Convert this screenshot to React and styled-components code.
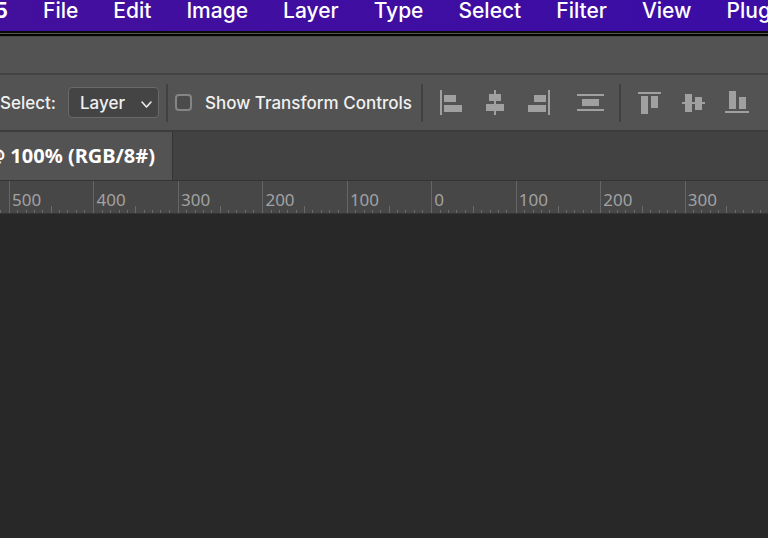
import React from "react";
import styled, { createGlobalStyle } from "styled-components";

const GlobalStyle = createGlobalStyle`
  * { box-sizing: border-box; }
  body { margin: 0; background: #282828; overflow: hidden; font-family: Inter, "Liberation Sans", sans-serif; }
  button { border: 0; padding: 0; background: none; color: inherit; font: inherit; flex: none; }
`;

const Window = styled.div`
  display: flex;
  flex-direction: column;
  min-height: 100vh;
  overflow: hidden;
  white-space: nowrap;
`;

const MenuBar = styled.nav`
  display: flex;
  align-items: flex-start;
  gap: 35px;
  height: 31px;
  background: linear-gradient(90deg, #430f9d, #3b0da6);
  color: #fff;
  font-size: 21px;
  font-weight: 500;
  line-height: 21px;
  overflow: hidden;
`;

const MenuItem = styled.button``;

const AppName = styled(MenuItem)`
  && {
    display: flex;
    justify-content: flex-end;
    width: 8px;
    font-weight: 700;
  }
`;

const WindowEdge = styled.div`
  height: 5px;
  border-top: 2px solid #0c0c0c;
  border-bottom: 2px solid #050505;
  background: #50574a;
`;

const TitleStrip = styled.div`
  height: 39px;
  background: #535353;
  border-top: 1px solid #474747;
  border-bottom: 2px solid #434343;
`;

const OptionsBar = styled.div`
  display: flex;
  align-items: center;
  height: 57px;
  background: #535353;
  border-bottom: 2px solid #3c3c3c;
  color: #f0f0f0;
  font-size: 17px;
  font-weight: 500;
  line-height: 24px;
`;

const SelectField = styled.label`
  flex: none;
  display: flex;
  align-items: center;
  gap: 12px;
  margin-right: 7px;
`;

const SelectBox = styled.span`
  position: relative;
  display: flex;
  svg { position: absolute; right: 5px; top: 12px; pointer-events: none; }
`;

const Select = styled.select`
  appearance: none;
  width: 91px;
  height: 31px;
  padding: 0 11px;
  color: inherit;
  font: inherit;
  background: #444;
  border: 1px solid #696969;
  border-radius: 4px;
`;

const Divider = styled.span`
  flex: none;
  width: 2px;
  height: 38px;
  background: #414141;
`;

const CheckField = styled.label`
  flex: none;
  display: flex;
  align-items: center;
  gap: 13px;
  margin: 0 9px 0 7px;
`;

const Checkbox = styled.input`
  appearance: none;
  width: 17px;
  height: 17px;
  margin: 0;
  background: #4b4b4b;
  border: 2px solid #858585;
  border-radius: 4px;
`;

const IconGroup = styled.div`
  flex: none;
  display: flex;
  gap: 16px;
  margin: ${(p) => p.$margin};
`;

const IconButton = styled.button`
  display: flex;
  color: #a0a0a0;
  svg { display: block; fill: currentColor; }
`;

const TabBar = styled.div`
  display: flex;
  height: 49px;
  background: #424242;
  border-bottom: 1px solid #343434;
`;

const Tab = styled.button`
  && {
    display: flex;
    align-items: center;
    justify-content: flex-end;
    width: 173px;
    padding-right: 17px;
    background: #535353;
    border-right: 1px solid #343434;
    color: #fff;
    font: 700 20px/24px "Noto Sans", sans-serif;
    overflow: hidden;
  }
`;

const Ruler = styled.div`
  display: flex;
  height: 33px;
  background: #474747;
  border-bottom: 1px solid #353535;
  overflow: hidden;
`;

const RulerCell = styled.div`
  flex: 0 0 11%;
  display: flex;
  flex-direction: column;
  justify-content: space-between;
  border-left: 1px solid #666;
  color: #a2a2a2;
  font: 17px/20px "Noto Sans", sans-serif;

  &:first-child { margin-left: calc(9px - 11%); }
`;

const RulerLabel = styled.span`
  height: 25px;
  padding: 9px 0 0 2px;
`;

const Ticks = styled.div`
  display: grid;
  grid-template-columns: repeat(10, 1fr);
  align-items: end;
  height: 7px;
`;

const Tick = styled.i`
  height: ${(p) => (p.$tall ? 7 : 3)}px;
  border-left: 1px solid #6a6a6a;
  margin-left: -1px;
`;

const Canvas = styled.main`
  flex: 1;
  background: #282828;
`;

const MENUS = ["File", "Edit", "Image", "Layer", "Type", "Select", "Filter", "View", "Plugins"];
const MARKS = ["", 500, 400, 300, 200, 100, 0, 100, 200, 300];

const ICONS = {
  "Align left edges": [[3, 1, 2, 25], [7, 6, 12, 7], [7, 16, 18, 7]],
  "Align horizontal centers": [[13, 1, 2, 25], [8, 5, 12, 7], [5, 15, 18, 7]],
  "Align right edges": [[23, 1, 2, 25], [9, 6, 12, 7], [3, 16, 18, 7]],
  "Distribute": [[0, 5, 27, 2], [5, 10, 17, 7], [0, 20, 27, 2]],
  "Align top edges": [[3, 3, 23, 2], [6, 7, 7, 18], [16, 7, 7, 12]],
  "Align vertical centers": [[3, 13, 23, 2], [6, 5, 7, 18], [16, 8, 7, 13]],
  "Align bottom edges": [[2, 22, 24, 2], [6, 2, 7, 18], [16, 8, 7, 12]],
};

function AlignButton({ name }) {
  return (
    <IconButton aria-label={name}>
      <svg width="28" height="28" viewBox="0 0 28 28" aria-hidden="true">
        {ICONS[name].map(([x, y, w, h], i) => (
          <rect key={i} x={x} y={y} width={w} height={h} />
        ))}
      </svg>
    </IconButton>
  );
}

export default function App() {
  return (
    <Window>
      <GlobalStyle />
      <MenuBar>
        <AppName>5</AppName>
        {MENUS.map((m) => (
          <MenuItem key={m}>{m}</MenuItem>
        ))}
      </MenuBar>
      <WindowEdge />
      <TitleStrip />
      <OptionsBar>
        <SelectField>
          Select:
          <SelectBox>
            <Select defaultValue="Layer">
              <option>Layer</option>
            </Select>
            <svg width="14" height="10" viewBox="0 0 14 10" fill="none" stroke="#eee" strokeWidth="1.6" strokeLinecap="round" strokeLinejoin="round">
              <path d="M2 3 6.500 8 11 3" />
            </svg>
          </SelectBox>
        </SelectField>
        <Divider />
        <CheckField>
          <Checkbox type="checkbox" />
          Show Transform Controls
        </CheckField>
        <Divider />
        <IconGroup $margin="0 0 0 14px">
          <AlignButton name="Align left edges" />
          <AlignButton name="Align horizontal centers" />
          <AlignButton name="Align right edges" />
        </IconGroup>
        <IconGroup $margin="0 14px 0 24px">
          <AlignButton name="Distribute" />
        </IconGroup>
        <Divider />
        <IconGroup $margin="0 0 0 14px">
          <AlignButton name="Align top edges" />
          <AlignButton name="Align vertical centers" />
          <AlignButton name="Align bottom edges" />
        </IconGroup>
      </OptionsBar>
      <TabBar>
        <Tab>@ 100% (RGB/8#)</Tab>
      </TabBar>
      <Ruler>
        {MARKS.map((m, i) => (
          <RulerCell key={i}>
            <RulerLabel>{m}</RulerLabel>
            <Ticks>
              {Array.from({ length: 10 }, (_, t) => (
                <Tick key={t} $tall={t === 5} />
              ))}
            </Ticks>
          </RulerCell>
        ))}
      </Ruler>
      <Canvas />
    </Window>
  );
}
